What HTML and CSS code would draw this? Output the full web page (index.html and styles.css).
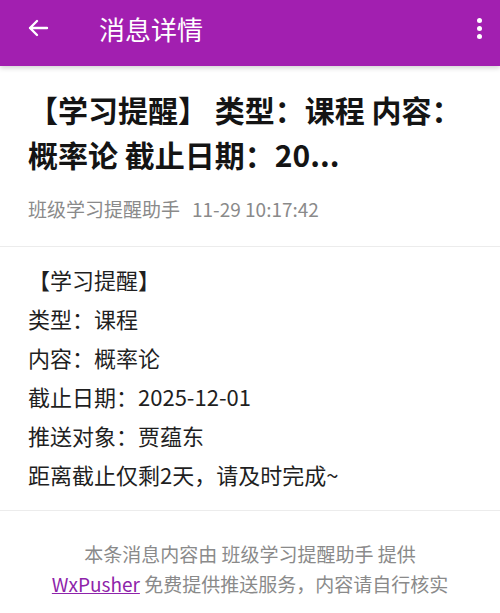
FILE: index.html
```html
<!DOCTYPE html>
<html lang="zh-CN">
<head>
    <meta charset="UTF-8">
    <title>消息详情</title>
    <link rel="stylesheet" href="styles.css">
</head>
<body>

<div class="topbar">
    <span class="back">
        <svg width="22" height="18" viewBox="0 0 22 18">
            <path d="M20 9H3M10 2L3 9l7 7" fill="none" stroke="#fff" stroke-width="2.4" stroke-linecap="round" stroke-linejoin="round"/>
        </svg>
    </span>
    <span class="bar-title">消息详情</span>
    <span class="more">
        <i></i><i></i><i></i>
    </span>
</div>

<div class="head">
    <h1 class="title">【学习提醒】 类型：课程 内容：概率论 截止日期：20...</h1>
    <p class="meta">班级学习提醒助手<span class="time">11-29 10:17:42</span></p>
</div>

<div class="content">
    <p>【学习提醒】</p>
    <p>类型：课程</p>
    <p>内容：概率论</p>
    <p>截止日期：2025-12-01</p>
    <p>推送对象：贾蕴东</p>
    <p>距离截止仅剩2天，请及时完成~</p>
</div>

<div class="foot">
    <p>本条消息内容由 班级学习提醒助手 提供</p>
    <p><a href="#">WxPusher</a> 免费提供推送服务，内容请自行核实</p>
</div>

</body>
</html>
```

FILE: styles.css
```css
*{
    margin: 0;
    padding: 0;
}
body{
    font-family: "Noto Sans CJK SC", "Noto Sans", sans-serif;
    background-color: #fff;
    color: #1f1f1f;
}
.topbar{
    height: 66px;
    background-color: #a21fb0;
    display: flex;
    align-items: center;
    padding: 0 17px 10px 27px;
    box-sizing: border-box;
    box-shadow: 0 2px 5px rgba(0,0,0,0.18);
    position: relative;
}
.back{
    display: flex;
    width: 22px;
}
.bar-title{
    color: #fff;
    font-size: 26px;
    margin-left: 50px;
    flex: 1;
}
.more{
    display: flex;
    flex-direction: column;
    gap: 3px;
    width: 6px;
}
.more i{
    display: block;
    width: 5px;
    height: 5px;
    border-radius: 50%;
    background-color: #fff;
}
.head{
    padding: 21px 28px 25px;
    border-bottom: 1px solid #ececec;
}
.title{
    font-size: 30px;
    font-weight: bold;
    line-height: 45px;
    color: #141414;
}
.meta{
    margin-top: 20px;
    font-size: 19px;
    line-height: 24px;
    color: #8a8a8a;
}
.time{
    margin-left: 12px;
}
.content{
    padding: 13px 28px 16px;
    border-bottom: 1px solid #ececec;
}
.content p{
    font-size: 22px;
    line-height: 39px;
    color: #1f1f1f;
}
.foot{
    padding: 28px 20px 0;
    text-align: center;
}
.foot p{
    font-size: 19px;
    line-height: 30px;
    color: #8a8a8a;
}
.foot a{
    color: #8e24aa;
    text-decoration: underline;
}
```
